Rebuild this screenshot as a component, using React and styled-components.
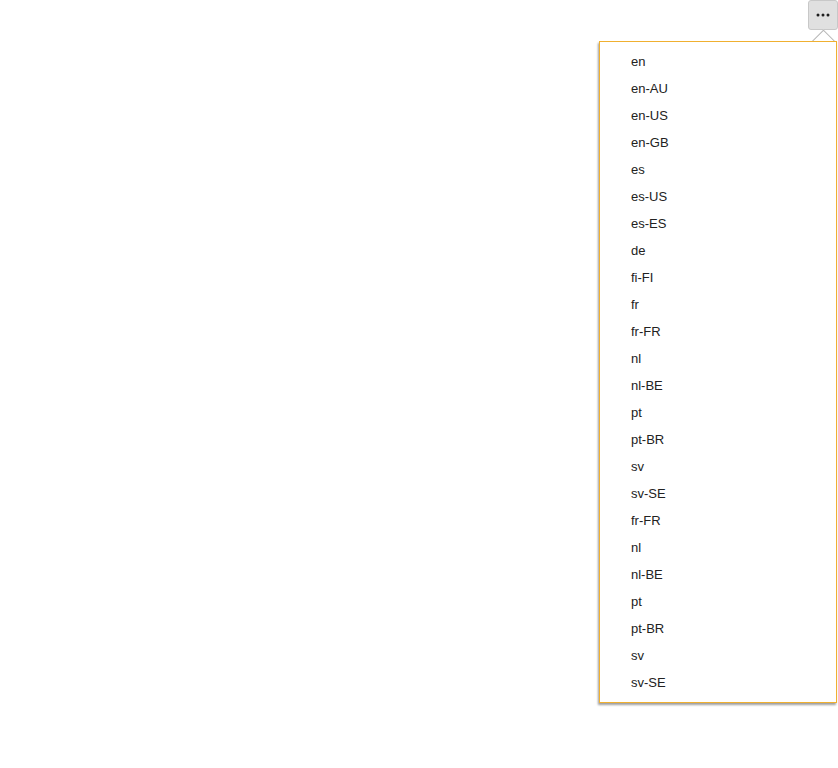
import React from "react";
import styled, { createGlobalStyle } from "styled-components";

const Global = createGlobalStyle`
  html, body { margin: 0; padding: 0; background: #fff; }
  body { font-family: "Liberation Sans", Arial, sans-serif; }
`;

const Page = styled.div`
  position: relative;
  width: 838px;
  height: 768px;
`;

const MoreButton = styled.button`
  position: absolute;
  top: 0;
  right: 0;
  width: 30px;
  height: 30px;
  box-sizing: border-box;
  border: 1px solid #c8c8c8;
  border-radius: 3px;
  background: #e0e0e0;
  display: flex;
  align-items: center;
  justify-content: center;
  padding: 0;
  cursor: pointer;
`;

const Menu = styled.ul`
  position: absolute;
  top: 41px;
  left: 599px;
  width: 238px;
  box-sizing: border-box;
  margin: 0;
  padding: 6px 0 6px;
  list-style: none;
  background: #fff;
  border: 1px solid #f0b030;
  box-shadow: -1px 2px 2px rgba(0, 0, 0, 0.38);
`;

const Caret = styled.div`
  position: absolute;
  top: -13px;
  right: 1px;
  width: 24px;
  height: 12px;
  overflow: hidden;
  &::before {
    content: "";
    position: absolute;
    left: 4px;
    top: 4px;
    width: 15px;
    height: 15px;
    background: #fff;
    border: 1px solid #b8b8b8;
    transform: rotate(45deg);
  }
`;

const Item = styled.li`
  height: 27px;
  line-height: 27px;
  padding-left: 31px;
  font-size: 13px;
  color: #222;
`;

const items = [
  "en", "en-AU", "en-US", "en-GB", "es", "es-US", "es-ES", "de", "fi-FI",
  "fr", "fr-FR", "nl", "nl-BE", "pt", "pt-BR", "sv", "sv-SE", "fr-FR",
  "nl", "nl-BE", "pt", "pt-BR", "sv", "sv-SE",
];

export default function App() {
  return (
    <Page>
      <Global />
      <MoreButton aria-label="More">
        <svg width="14" height="4" viewBox="0 0 14 4">
          <circle cx="2" cy="2" r="1.5" fill="#1e1e1e" />
          <circle cx="7" cy="2" r="1.5" fill="#1e1e1e" />
          <circle cx="12" cy="2" r="1.5" fill="#1e1e1e" />
        </svg>
      </MoreButton>
      <Menu>
        <Caret />
        {items.map((t, i) => (
          <Item key={i}>{t}</Item>
        ))}
      </Menu>
    </Page>
  );
}
